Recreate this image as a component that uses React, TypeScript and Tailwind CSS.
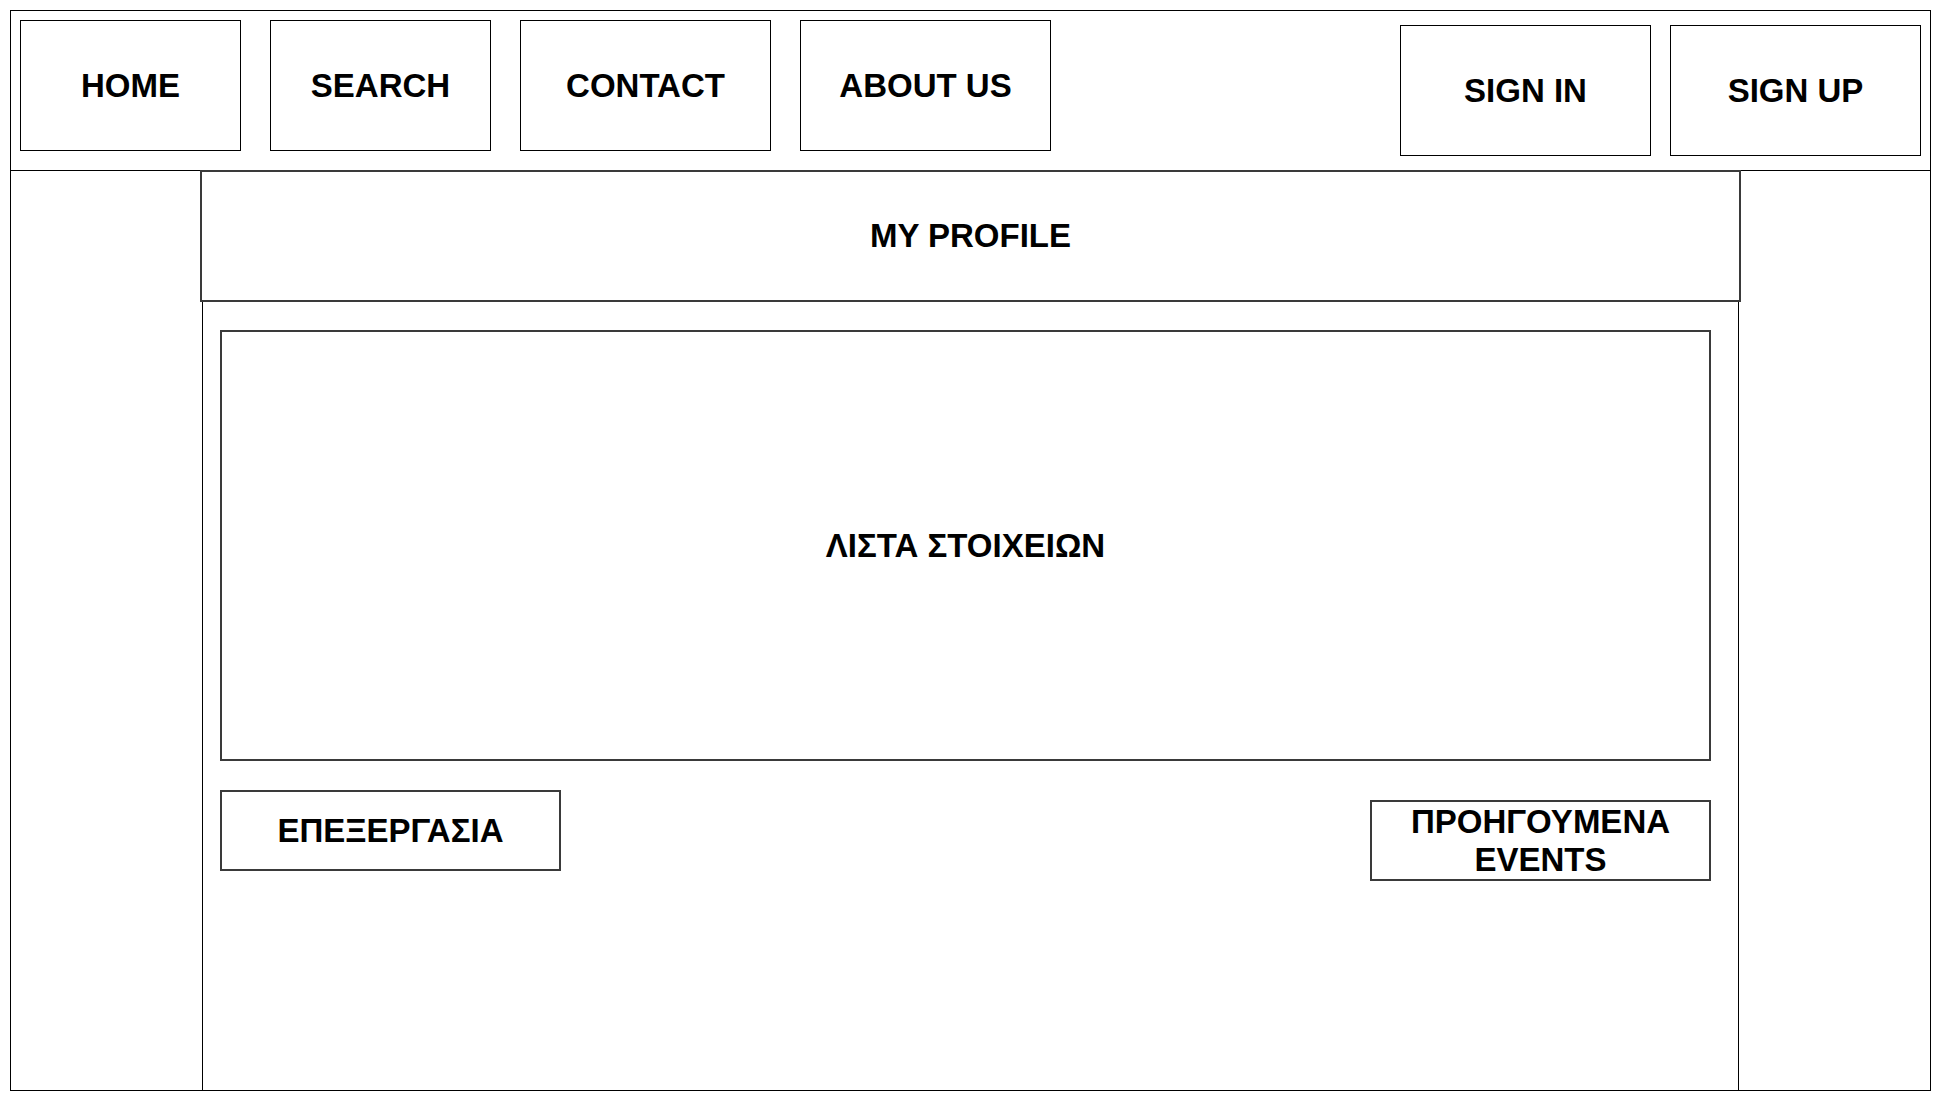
const NAV_LEFT = [
  { label: "HOME", w: "w-[221px]" },
  { label: "SEARCH", w: "w-[221px]" },
  { label: "CONTACT", w: "w-[251px]" },
  { label: "ABOUT US", w: "w-[251px]" },
];

const NAV_RIGHT = ["SIGN IN", "SIGN UP"];

function NavBox({ label, className }: { label: string; className: string }) {
  return (
    <div
      className={`flex h-[131px] items-center justify-center border border-black text-[33px] font-bold ${className}`}
    >
      {label}
    </div>
  );
}

export default function App() {
  return (
    <div className="min-h-[1101px] bg-white pl-[10px] pt-[10px] text-black [font-family:'Liberation_Sans',Arial,sans-serif]">
      <div className="flex h-[1081px] w-[1921px] flex-col border border-black">
        {/* Top navigation */}
        <header className="flex h-[160px] shrink-0 items-start justify-between border-b border-black px-[9px] pt-[9px]">
          <nav className="flex gap-[29px]">
            {NAV_LEFT.map((n) => (
              <NavBox key={n.label} label={n.label} className={n.w} />
            ))}
          </nav>
          <div className="mt-[5px] flex gap-[19px]">
            {NAV_RIGHT.map((n) => (
              <NavBox key={n} label={n} className="w-[251px]" />
            ))}
          </div>
        </header>

        {/* Profile area */}
        <main className="flex flex-1 flex-col pl-[189px]">
          <div className="-mt-px flex h-[132px] w-[1541px] shrink-0 items-center justify-center border-2 border-[#3a3a3a] text-[33px] font-bold">
            MY PROFILE
          </div>

          <section className="ml-[2px] flex w-[1537px] flex-1 flex-col border-x border-black pl-[17px] pt-[28px]">
            <div className="flex h-[431px] w-[1491px] items-center justify-center border-2 border-[#3a3a3a] text-[33px] font-bold">
              ΛΙΣΤΑ ΣΤΟΙΧΕΙΩΝ
            </div>

            <div className="mt-[29px] flex w-[1491px] items-start justify-between">
              <button className="flex h-[81px] w-[341px] items-center justify-center border-2 border-[#3a3a3a] text-[33px] font-bold">
                ΕΠΕΞΕΡΓΑΣΙΑ
              </button>
              <button className="mt-[10px] flex h-[81px] w-[341px] items-center justify-center border-2 border-[#3a3a3a] text-center text-[33px] font-bold leading-[38px]">
                ΠΡΟΗΓΟΥΜΕΝΑ
                <br />
                EVENTS
              </button>
            </div>
          </section>
        </main>
      </div>
    </div>
  );
}
